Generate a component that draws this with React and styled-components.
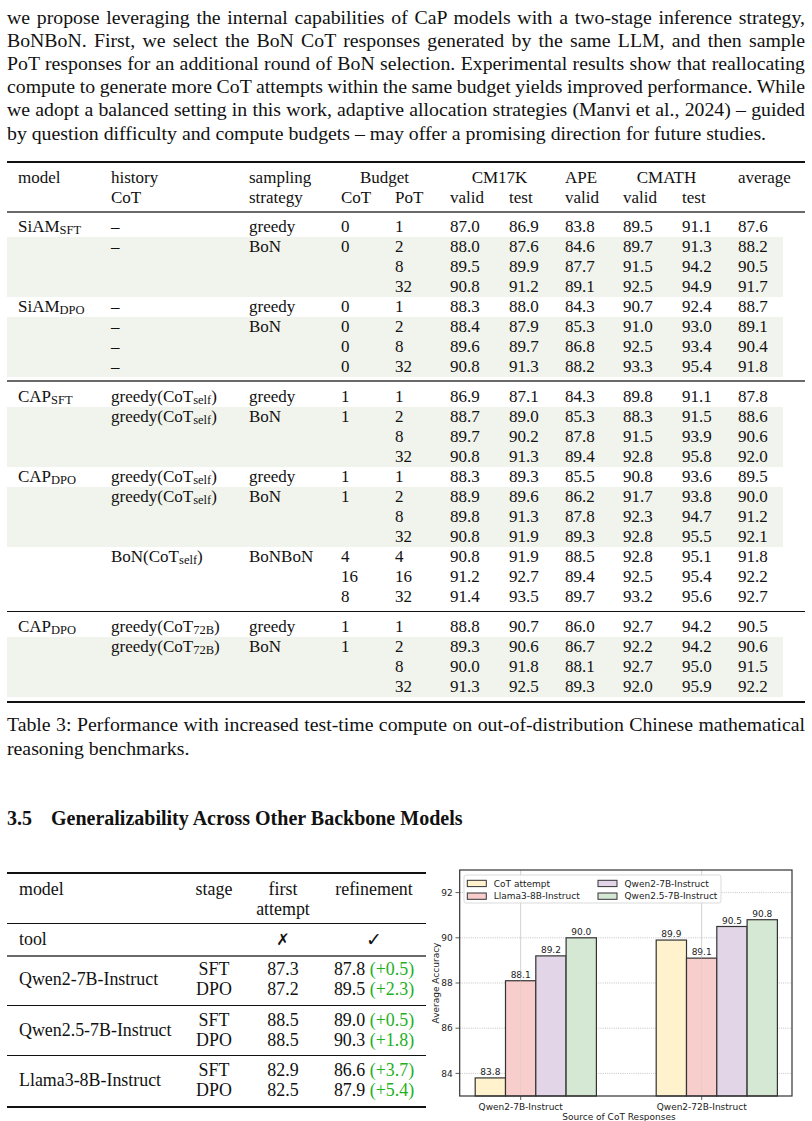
import React from "react";
import styled, { createGlobalStyle } from "styled-components";

const GlobalStyle = createGlobalStyle`
  html, body {
    margin: 0;
    padding: 0;
    background: #fff;
  }
  body {
    font-family: "Liberation Serif", "Times New Roman", serif;
    color: #111;
  }
`;

const Page = styled.div`
  width: 798px;
  padding: 5.5px 7px 0;
`;

const Paragraph = styled.div`
  font-size: 19.8px;
  line-height: 23.2px;
`;

const Line = styled.div`
  text-align: justify;
  text-align-last: ${p => (p.$last ? "left" : "justify")};
  word-spacing: ${p => (p.$last ? "0" : "-2.5px")};
`;

// ---------- big table ----------
const BigTable = styled.div`
  margin-top: 16.3px;
  width: 798px;
  font-size: 17px;
  line-height: 20px;
`;

const Rule = styled.div`
  width: 100%;
  height: ${p => (p.$kind === "thin" ? 1 : 2)}px;
  background: ${p => (p.$kind === "mid" ? "#6a6a6a" : "#111")};
  margin-top: ${p => p.$above || 0}px;
  margin-bottom: ${p => p.$below || 0}px;
`;

const Row = styled.div`
  display: grid;
  grid-template-columns: 93px 138px 92px 54px 55px 59px 56px 58px 59px 56px 45px;
  padding-left: 11px;
  width: 776px;
  box-sizing: border-box;
  height: 20px;
  background: ${p => (p.$shaded ? "#f1f4ec" : "transparent")};
  white-space: nowrap;
`;

const HeadBlock = styled.div`
  padding-top: 5px;
`;

const Cell = styled.div`
  grid-column: ${p => p.$span || "auto"};
  text-align: ${p => (p.$center ? "center" : "left")};
  padding-right: ${p => p.$pr || 0}px;
`;

const Sub = styled.span`
  font-size: 12.5px;
  position: relative;
  top: 2px;
`;

const Caption = styled.div`
  margin-top: 10.7px;
  font-size: 19.8px;
  line-height: 23.2px;
`;

const Heading = styled.h3`
  margin: 46px 0 0;
  font-size: 20px;
  line-height: 24px;
  font-weight: bold;
  display: flex;
  gap: 19px;
`;

// ---------- bottom ----------
const Bottom = styled.div`
  margin-top: 30px;
  display: flex;
  align-items: flex-start;
`;

const SmallTable = styled.div`
  width: 419px;
  flex: none;
  margin-top: 12.7px;
  font-size: 17.9px;
  line-height: 20px;
`;

const SRow = styled.div`
  display: grid;
  grid-template-columns: 162px 66px 72px 110px;
  padding-left: 12px;
  white-space: nowrap;
`;

const SBlock = styled.div`
  padding-top: ${p => p.$top}px;
  padding-bottom: ${p => p.$bottom}px;
`;

const SCell = styled.div`
  text-align: ${p => (p.$left ? "left" : "center")};
  grid-row: ${p => p.$rows || "auto"};
  align-self: center;
`;

const Mark = styled.span`
  font-family: "DejaVu Sans", sans-serif;
  font-size: ${p => p.$size}px;
  font-weight: bold;
`;

const Gain = styled.span`
  color: #22b022;
`;

const ChartSvg = styled.svg`
  flex: none;
  display: block;
  margin-left: -1px;
  font-family: "DejaVu Sans", sans-serif;
`;

const paragraph = [
  "we propose leveraging the internal capabilities of CaP models with a two-stage inference strategy,",
  "BoNBoN. First, we select the BoN CoT responses generated by the same LLM, and then sample",
  "PoT responses for an additional round of BoN selection. Experimental results show that reallocating",
  "compute to generate more CoT attempts within the same budget yields improved performance. While",
  "we adopt a balanced setting in this work, adaptive allocation strategies (Manvi et al., 2024) – guided",
  "by question difficulty and compute budgets – may offer a promising direction for future studies.",
];

const self = <>CoT<Sub>self</Sub></>;
const big = <>CoT<Sub>72B</Sub></>;

const r = (m, h, s, c, p, v, shaded) => ({ m, h, s, c, p, v: v.split(" "), shaded });

const sections = [
  {
    rule: "mid",
    rows: [
      r(<>SiAM<Sub>SFT</Sub></>, "–", "greedy", "0", "1", "87.0 86.9 83.8 89.5 91.1 87.6"),
      r(null, "–", "BoN", "0", "2", "88.0 87.6 84.6 89.7 91.3 88.2", true),
      r(null, "", "", "", "8", "89.5 89.9 87.7 91.5 94.2 90.5", true),
      r(null, "", "", "", "32", "90.8 91.2 89.1 92.5 94.9 91.7", true),
      r(<>SiAM<Sub>DPO</Sub></>, "–", "greedy", "0", "1", "88.3 88.0 84.3 90.7 92.4 88.7"),
      r(null, "–", "BoN", "0", "2", "88.4 87.9 85.3 91.0 93.0 89.1", true),
      r(null, "–", "", "0", "8", "89.6 89.7 86.8 92.5 93.4 90.4", true),
      r(null, "–", "", "0", "32", "90.8 91.3 88.2 93.3 95.4 91.8", true),
    ],
  },
  {
    rule: "thin",
    rows: [
      r(<>CAP<Sub>SFT</Sub></>, <>greedy({self})</>, "greedy", "1", "1", "86.9 87.1 84.3 89.8 91.1 87.8"),
      r(null, <>greedy({self})</>, "BoN", "1", "2", "88.7 89.0 85.3 88.3 91.5 88.6", true),
      r(null, "", "", "", "8", "89.7 90.2 87.8 91.5 93.9 90.6", true),
      r(null, "", "", "", "32", "90.8 91.3 89.4 92.8 95.8 92.0", true),
      r(<>CAP<Sub>DPO</Sub></>, <>greedy({self})</>, "greedy", "1", "1", "88.3 89.3 85.5 90.8 93.6 89.5"),
      r(null, <>greedy({self})</>, "BoN", "1", "2", "88.9 89.6 86.2 91.7 93.8 90.0", true),
      r(null, "", "", "", "8", "89.8 91.3 87.8 92.3 94.7 91.2", true),
      r(null, "", "", "", "32", "90.8 91.9 89.3 92.8 95.5 92.1", true),
      r(null, <>BoN({self})</>, "BoNBoN", "4", "4", "90.8 91.9 88.5 92.8 95.1 91.8"),
      r(null, "", "", "16", "16", "91.2 92.7 89.4 92.5 95.4 92.2"),
      r(null, "", "", "8", "32", "91.4 93.5 89.7 93.2 95.6 92.7"),
    ],
  },
  {
    rule: null,
    rows: [
      r(<>CAP<Sub>DPO</Sub></>, <>greedy({big})</>, "greedy", "1", "1", "88.8 90.7 86.0 92.7 94.2 90.5"),
      r(null, <>greedy({big})</>, "BoN", "1", "2", "89.3 90.6 86.7 92.2 94.2 90.6", true),
      r(null, "", "", "", "8", "90.0 91.8 88.1 92.7 95.0 91.5", true),
      r(null, "", "", "", "32", "91.3 92.5 89.3 92.0 95.9 92.2", true),
    ],
  },
];

const backbones = [
  { name: "Qwen2-7B-Instruct", rows: [["SFT", "87.3", "87.8", "+0.5"], ["DPO", "87.2", "89.5", "+2.3"]], top: 2, bottom: 6 },
  { name: "Qwen2.5-7B-Instruct", rows: [["SFT", "88.5", "89.0", "+0.5"], ["DPO", "88.5", "90.3", "+1.8"]], top: 4, bottom: 5 },
  { name: "Llama3-8B-Instruct", rows: [["SFT", "82.9", "86.6", "+3.7"], ["DPO", "82.5", "87.9", "+5.4"]], top: 4, bottom: 6 },
];

const BigTableView = () => (
  <BigTable>
    <Rule $kind="thick" />
    <HeadBlock>
      <Row>
        <Cell>model</Cell>
        <Cell>history</Cell>
        <Cell>sampling</Cell>
        <Cell $span="span 2" $center $pr={22}>Budget</Cell>
        <Cell $span="span 2" $center $pr={16}>CM17K</Cell>
        <Cell>APE</Cell>
        <Cell $span="span 2" $center $pr={28}>CMATH</Cell>
        <Cell>average</Cell>
      </Row>
      <Row>
        <Cell />
        <Cell>CoT</Cell>
        <Cell>strategy</Cell>
        <Cell>CoT</Cell>
        <Cell>PoT</Cell>
        <Cell>valid</Cell>
        <Cell>test</Cell>
        <Cell>valid</Cell>
        <Cell>valid</Cell>
        <Cell>test</Cell>
        <Cell />
      </Row>
    </HeadBlock>
    <Rule $kind="mid" $above={2.5} $below={4.2} />
    {sections.map((sec, i) => (
      <React.Fragment key={i}>
        {sec.rows.map((row, j) => (
          <Row key={j} $shaded={row.shaded}>
            <Cell>{row.m}</Cell>
            <Cell>{row.h}</Cell>
            <Cell>{row.s}</Cell>
            <Cell>{row.c}</Cell>
            <Cell>{row.p}</Cell>
            {row.v.map((val, k) => (
              <Cell key={k}>{val}</Cell>
            ))}
          </Row>
        ))}
        {sec.rule && (
          <Rule $kind={sec.rule} $above={sec.rule === "mid" ? 3 : 4} $below={5} />
        )}
      </React.Fragment>
    ))}
    <Rule $kind="thick" $above={4} />
  </BigTable>
);

const BackboneTable = () => (
  <SmallTable>
    <Rule $kind="thick" />
    <SBlock $top={4.6} $bottom={4}>
      <SRow>
        <SCell $left>model</SCell>
        <SCell>stage</SCell>
        <SCell>first</SCell>
        <SCell>refinement</SCell>
      </SRow>
      <SRow>
        <SCell $left />
        <SCell />
        <SCell>attempt</SCell>
        <SCell />
      </SRow>
    </SBlock>
    <Rule $kind="thin" />
    <SBlock $top={4.7} $bottom={5}>
      <SRow>
        <SCell $left>tool</SCell>
        <SCell />
        <SCell><Mark $size={16}>✗</Mark></SCell>
        <SCell><Mark $size={19}>✓</Mark></SCell>
      </SRow>
    </SBlock>
    <Rule $kind="mid" />
    {backbones.map((b, i) => (
      <React.Fragment key={b.name}>
        <SBlock $top={b.top} $bottom={b.bottom}>
          <SRow>
            <SCell $left $rows="1 / span 2">{b.name}</SCell>
            {b.rows.map(([stage, first, refined, gain]) => (
              <React.Fragment key={stage}>
                <SCell>{stage}</SCell>
                <SCell>{first}</SCell>
                <SCell>
                  {refined} <Gain>({gain})</Gain>
                </SCell>
              </React.Fragment>
            ))}
          </SRow>
        </SBlock>
        <Rule $kind={i === backbones.length - 1 ? "thick" : "thin"} />
      </React.Fragment>
    ))}
  </SmallTable>
);

// chart, drawn in page coordinates and shifted into the svg
const AX = { l: 460.7, t: 870, r: 793, b: 1096 };
const yOf = v => AX.b - (v - 83) * 22.6;
const COLORS = ["#fff2cc", "#f8cecc", "#e1d5e7", "#d5e8d4"];
const GROUPS = [
  { x: 521.7, label: "Qwen2-7B-Instruct", vals: [83.8, 88.1, 89.2, 90.0] },
  { x: 702.7, label: "Qwen2-72B-Instruct", vals: [89.9, 89.1, 90.5, 90.8] },
];
const LEGEND = [
  { label: "CoT attempt", x: 468.3, y: 883.3 },
  { label: "Llama3-8B-Instruct", x: 468.3, y: 896 },
  { label: "Qwen2-7B-Instruct", x: 599, y: 883.3 },
  { label: "Qwen2.5-7B-Instruct", x: 599, y: 896 },
];
const BAR_W = 30.3;

const Chart = () => (
  <ChartSvg width="387" height="261" viewBox="0 0 387 261">
    <g transform="translate(-426 -860)" fontSize="9" fill="#222">
      {[84, 86, 88, 90, 92].map(v => (
        <g key={v}>
          <line x1={AX.l} x2={AX.r} y1={yOf(v)} y2={yOf(v)} stroke="#b5b5b5" strokeWidth="0.8" strokeDasharray="1 1.2" />
          <line x1={AX.l - 4.2} x2={AX.l} y1={yOf(v)} y2={yOf(v)} stroke="#333" strokeWidth="0.8" />
          <text x={AX.l - 7} y={yOf(v) + 3.2} textAnchor="end">{v}</text>
        </g>
      ))}
      {GROUPS.map(g => (
        <line key={g.label} x1={g.x} x2={g.x} y1={AX.t} y2={AX.b} stroke="#d0d0d0" strokeWidth="0.8" />
      ))}
      {GROUPS.map(g =>
        g.vals.map((v, i) => {
          const x = g.x - 45.5 + i * BAR_W;
          return (
            <g key={g.label + i}>
              <rect x={x} y={yOf(v)} width={BAR_W} height={AX.b - yOf(v)} fill={COLORS[i]} stroke="#333" strokeWidth="1.2" />
              <text x={x + BAR_W / 2} y={yOf(v) - 3} textAnchor="middle">{v.toFixed(1)}</text>
            </g>
          );
        })
      )}
      {GROUPS.map(g => (
        <g key={"t" + g.label}>
          <line x1={g.x} x2={g.x} y1={AX.t} y2={AX.b} stroke="#c8c8c8" strokeWidth="0.6" opacity="0.6" />
          <line x1={g.x} x2={g.x} y1={AX.b} y2={AX.b + 4} stroke="#333" strokeWidth="0.8" />
          <text x={g.x} y={1109.5} textAnchor="middle">{g.label}</text>
        </g>
      ))}
      <rect x={AX.l} y={AX.t} width={AX.r - AX.l} height={AX.b - AX.t} fill="none" stroke="#333" strokeWidth="1.2" />
      <rect x="465" y="875" width="257" height="28" rx="2" fill="#fff" fillOpacity="0.85" stroke="#d2d2d2" strokeWidth="0.8" />
      {LEGEND.map((item, i) => (
        <g key={item.label}>
          <rect x={item.x} y={item.y - 3} width="19" height="6.3" fill={COLORS[i]} stroke="#333" strokeWidth="1" />
          <text x={item.x + 26.5} y={item.y + 3.2}>{item.label}</text>
        </g>
      ))}
      <text x="437" y="983" textAnchor="middle" dominantBaseline="central" transform="rotate(-90 437 983)">
        Average Accuracy
      </text>
      <text x="620" y="1119.5" textAnchor="middle">Source of CoT Responses</text>
    </g>
  </ChartSvg>
);

const App = () => (
  <>
    <GlobalStyle />
    <Page>
      <Paragraph>
        {paragraph.map((t, i) => (
          <Line key={i} $last={i === paragraph.length - 1}>{t}</Line>
        ))}
      </Paragraph>
      <BigTableView />
      <Caption>
        <Line>Table 3: Performance with increased test-time compute on out-of-distribution Chinese mathematical</Line>
        <Line $last>reasoning benchmarks.</Line>
      </Caption>
      <Heading>
        <span>3.5</span>
        <span>Generalizability Across Other Backbone Models</span>
      </Heading>
      <Bottom>
        <BackboneTable />
        <Chart />
      </Bottom>
    </Page>
  </>
);

export default App;
